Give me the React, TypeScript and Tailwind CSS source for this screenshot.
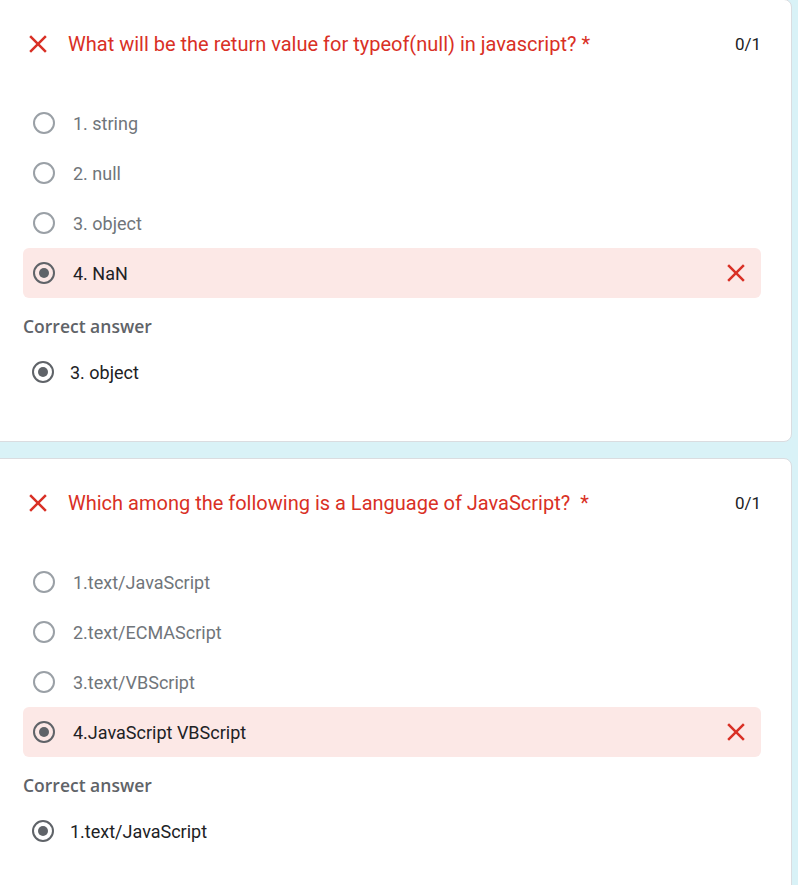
import React from 'react';

interface Option {
  label: string;
  picked?: boolean;
}

interface Question {
  title: string;
  score: string;
  options: Option[];
  answer: string;
}

const questions: Question[] = [
  {
    title: 'What will be the return value for typeof(null) in javascript?',
    score: '0/1',
    options: [
      { label: '1. string' },
      { label: '2. null' },
      { label: '3. object' },
      { label: '4. NaN', picked: true },
    ],
    answer: '3. object',
  },
  {
    title: 'Which among the following is a Language of JavaScript?\u00a0',
    score: '0/1',
    options: [
      { label: '1.text/JavaScript' },
      { label: '2.text/ECMAScript' },
      { label: '3.text/VBScript' },
      { label: '4.JavaScript VBScript', picked: true },
    ],
    answer: '1.text/JavaScript',
  },
];

const CloseIcon: React.FC = () => (
  <svg viewBox="0 0 24 24" className="h-[30px] w-[30px] shrink-0 fill-[#d93025]">
    <path d="M19 6.41 17.59 5 12 10.59 6.41 5 5 6.41 10.59 12 5 17.59 6.41 19 12 13.41 17.59 19 19 17.59 13.41 12z" />
  </svg>
);

const Radio: React.FC<{ checked?: boolean }> = ({ checked = false }) => {
  if (checked) {
    return (
      <div className="flex h-[22px] w-[22px] shrink-0 items-center justify-center rounded-full border-2 border-[#5f6368]">
        <div className="h-[10px] w-[10px] rounded-full bg-[#5f6368]"></div>
      </div>
    );
  }
  return <div className="h-[22px] w-[22px] shrink-0 rounded-full border-2 border-[#9aa0a6]"></div>;
};

const QuestionCard: React.FC<{ q: Question }> = ({ q }) => {
  return (
    <div className="w-[793px] rounded-r-lg border border-[#dadce0] bg-white pl-[23px] pr-[30px] pt-[29px] pb-[44px]">
      {/* header */}
      <div className="flex items-center">
        <CloseIcon />
        <div className="ml-[15px] flex-1 text-[20px] leading-[26px] text-[#d93025]">
          {q.title} <span>*</span>
        </div>
        <div className="text-[17px] leading-[24px] text-[#202124]">{q.score}</div>
      </div>

      {/* options */}
      <div className="mt-[39px] flex flex-col">
        {q.options.map((opt) => (
          <div
            key={opt.label}
            className={
              opt.picked
                ? 'flex h-[50px] items-center rounded-md bg-[#fce8e6] pl-[10px] pr-[10px]'
                : 'flex h-[50px] items-center pl-[10px] pr-[10px]'
            }
          >
            <Radio checked={opt.picked} />
            <span
              className={
                opt.picked
                  ? 'ml-[18px] flex-1 text-[18px] text-[#202124]'
                  : 'ml-[18px] flex-1 text-[18px] text-[#70757a]'
              }
            >
              {opt.label}
            </span>
            {opt.picked && <CloseIcon />}
          </div>
        ))}
      </div>

      {/* correct answer */}
      <div className="mt-[18px] font-['Open_Sans',sans-serif] text-[17.5px] leading-[20px] font-semibold text-[#5f6368]">
        Correct answer
      </div>
      <div className="mt-[11px] flex h-[50px] items-center pl-[9px]">
        <Radio checked />
        <span className="ml-[16px] text-[18px] text-[#202124]">{q.answer}</span>
      </div>
    </div>
  );
};

export default function App() {
  return (
    <div className="min-h-screen overflow-hidden bg-[#d9f2f7] font-['Roboto','Liberation_Sans',sans-serif]">
      <div className="-mt-px -ml-px flex flex-col gap-[16px]">
        {questions.map((q) => (
          <QuestionCard key={q.title} q={q} />
        ))}
      </div>
    </div>
  );
}
